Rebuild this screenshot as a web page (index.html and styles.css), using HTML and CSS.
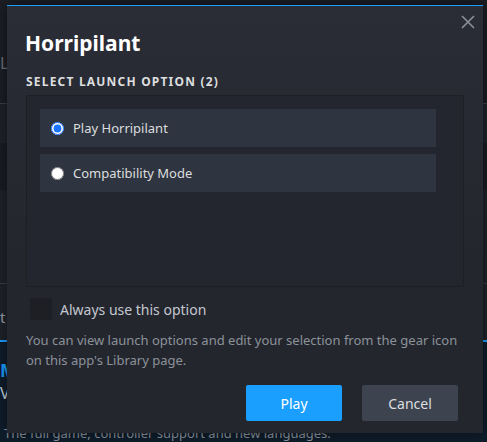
FILE: index.html
```html
<!DOCTYPE html>
<html lang="en">
<head>
  <meta charset="UTF-8">
  <title>Launch Options</title>
  <link rel="stylesheet" href="styles.css">
</head>
<body>
  <div class="page">
    <div class="page-head"><span class="clip">LC</span></div>
    <div class="page-row"></div>
    <div class="page-row dark"></div>
    <div class="page-row tall"></div>
    <div class="page-row thin"></div>
    <div class="page-note"><span class="clip">t</span></div>
    <div class="page-promo">
      <div class="promo-title"><span class="clip">M</span></div>
      <div class="promo-sub"><span class="clip">V</span></div>
      <div class="promo-text">The full game, controller support and new languages.</div>
    </div>
  </div>

  <div class="modal">
    <button class="close-btn" aria-label="Close">
      <svg width="14" height="14" viewBox="0 0 14 14">
        <path d="M1 1 L13 13 M13 1 L1 13" stroke="#8b929a" stroke-width="1.6" fill="none"/>
      </svg>
    </button>
    <h1>Horripilant</h1>
    <div class="section-label">Select launch option (2)</div>

    <div class="options">
      <label class="option">
        <input type="radio" name="launch" checked>
        <span>Play Horripilant</span>
      </label>
      <label class="option">
        <input type="radio" name="launch">
        <span>Compatibility Mode</span>
      </label>
    </div>

    <label class="always">
      <span class="box"></span>
      <span>Always use this option</span>
    </label>

    <p class="hint">You can view launch options and edit your selection from the gear icon on this app's Library page.</p>

    <div class="actions">
      <button class="btn btn-play">Play</button>
      <button class="btn btn-cancel">Cancel</button>
    </div>
  </div>
</body>
</html>
```
FILE: styles.css
```css
body {
  margin: 0;
  width: 487px;
  height: 442px;
  overflow: hidden;
  background: #14161b;
  font-family: 'Noto Sans', sans-serif;
  position: relative;
}
.page {
  height: 100%;
  display: flex;
  flex-direction: column;
}
.clip {
  display: inline-block;
  width: 7px;
  overflow: hidden;
  white-space: nowrap;
  vertical-align: top;
}
.page-head {
  height: 104px;
  color: #6b7079;
  font-size: 16px;
  padding-top: 52px;
  box-sizing: border-box;
  border-bottom: 1px solid #3a3e46;
  background: #1b1e24;
}
.page-row {
  height: 39px;
  background: #1f222a;
}
.page-row.dark {
  height: 47px;
  background: #191c22;
}
.page-row.tall {
  height: 73px;
  background: #1f222a;
}
.page-row.thin {
  height: 20px;
  background: #1f222a;
  border-bottom: 1px solid #3a3e46;
}
.page-note {
  height: 56px;
  color: #9aa0a8;
  font-size: 15px;
  padding-top: 23px;
  box-sizing: border-box;
  background: #1f222a;
}
.page-promo {
  flex: 1;
  border-top: 2px solid #1a9fff;
  background: #0f1d2b;
  padding-top: 16px;
}
.promo-title {
  color: #1a9fff;
  font-size: 18px;
  font-weight: bold;
  line-height: 24px;
}
.promo-sub {
  color: #c6d4df;
  font-size: 16px;
  line-height: 22px;
}
.promo-text {
  color: #8b929a;
  font-size: 13px;
  margin-top: 20px;
  padding-left: 4px;
  line-height: 18px;
}

.modal {
  position: absolute;
  left: 7px;
  top: 5px;
  width: 476px;
  height: 428px;
  box-sizing: border-box;
  border-top: 1px solid #1a9fff;
  background: linear-gradient(to bottom, #2a2d36, #24262e 60%);
  padding: 0 19px 0 19px;
  box-shadow: 0 0 12px rgba(0,0,0,0.5);
}
.close-btn {
  position: absolute;
  top: 9px;
  right: 8px;
  background: none;
  border: none;
  padding: 0;
  cursor: pointer;
}
.modal h1 {
  margin: 23px 0 0 -1px;
  font-size: 21px;
  font-weight: 700;
  color: #ffffff;
  line-height: 28px;
}
.section-label {
  margin-top: 17px;
  text-transform: uppercase;
  letter-spacing: 1.2px;
  font-size: 12px;
  font-weight: 700;
  color: #dcdedf;
  line-height: 16px;
}
.options {
  margin-top: 5px;
  height: 192px;
  box-sizing: border-box;
  background: #23262e;
  border: 1px solid #1d1f25;
  border-radius: 2px;
  padding: 13px 27px 0 13px;
  display: flex;
  flex-direction: column;
  gap: 7px;
}
.option {
  height: 38px;
  background: #2f3540;
  display: flex;
  align-items: center;
  padding-left: 11px;
  gap: 9px;
  font-size: 13px;
  color: #dcdedf;
  cursor: pointer;
}
.option input {
  margin: 0;
  width: 13px;
  height: 13px;
  accent-color: #1a73ff;
}
.always {
  margin-top: 11px;
  margin-left: 4px;
  display: flex;
  align-items: center;
  gap: 8px;
  font-size: 14px;
  color: #c3c7cf;
}
.always .box {
  width: 22px;
  height: 22px;
  background: #1e1f25;
  border-radius: 2px;
}
.hint {
  margin: 10px 0 0 0;
  font-size: 13px;
  line-height: 20px;
  color: #8b929a;
}
.actions {
  margin-top: 15px;
  display: flex;
  justify-content: flex-end;
  gap: 20px;
  padding-right: 6px;
}
.btn {
  width: 96px;
  height: 36px;
  border: none;
  border-radius: 2px;
  font-family: inherit;
  font-size: 14px;
  cursor: pointer;
}
.btn-play {
  background: #1a9fff;
  color: #ffffff;
}
.btn-cancel {
  background: #3d4450;
  color: #dcdedf;
}
```
